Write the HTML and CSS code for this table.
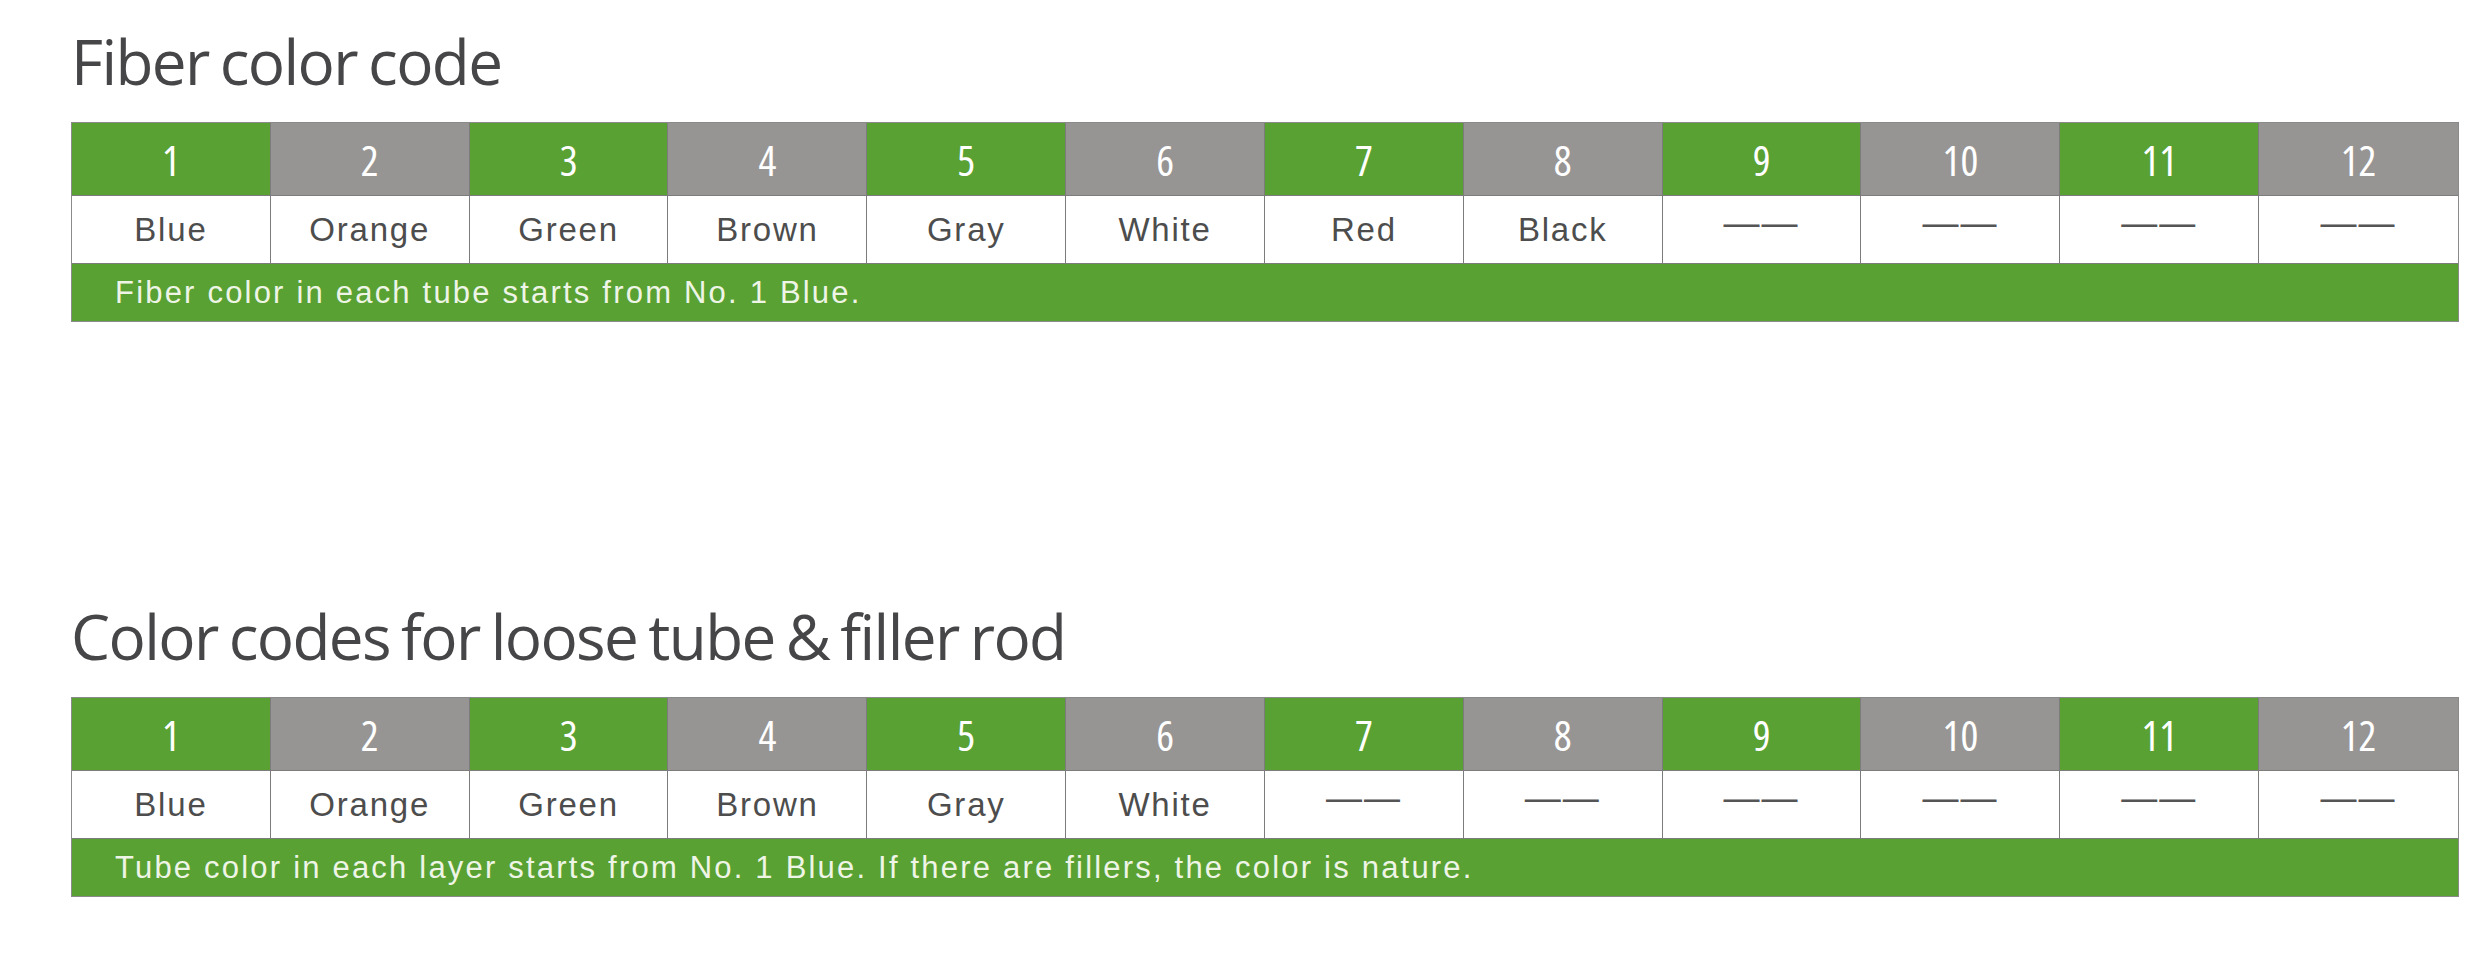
FILE: index.html
```html
<!DOCTYPE html>
<html lang="en">
<head>
<meta charset="utf-8">
<title>Color codes</title>
<link rel="stylesheet" href="styles.css">
</head>
<body>
<main class="sheet">
  <section class="block">
    <h2 class="title">Fiber color code</h2>
    <div class="codes">
      <div class="num green">1</div>
      <div class="num gray">2</div>
      <div class="num green">3</div>
      <div class="num gray">4</div>
      <div class="num green">5</div>
      <div class="num gray">6</div>
      <div class="num green">7</div>
      <div class="num gray">8</div>
      <div class="num green">9</div>
      <div class="num gray">10</div>
      <div class="num green">11</div>
      <div class="num gray">12</div>
      <div class="name">Blue</div>
      <div class="name">Orange</div>
      <div class="name">Green</div>
      <div class="name">Brown</div>
      <div class="name">Gray</div>
      <div class="name">White</div>
      <div class="name">Red</div>
      <div class="name">Black</div>
      <div class="name"><span class="dash">——</span></div>
      <div class="name"><span class="dash">——</span></div>
      <div class="name"><span class="dash">——</span></div>
      <div class="name"><span class="dash">——</span></div>
      <div class="note">Fiber color in each tube starts from No. 1 Blue.</div>
    </div>
  </section>
  <section class="block second">
    <h2 class="title">Color codes for loose tube &amp; filler rod</h2>
    <div class="codes">
      <div class="num green">1</div>
      <div class="num gray">2</div>
      <div class="num green">3</div>
      <div class="num gray">4</div>
      <div class="num green">5</div>
      <div class="num gray">6</div>
      <div class="num green">7</div>
      <div class="num gray">8</div>
      <div class="num green">9</div>
      <div class="num gray">10</div>
      <div class="num green">11</div>
      <div class="num gray">12</div>
      <div class="name">Blue</div>
      <div class="name">Orange</div>
      <div class="name">Green</div>
      <div class="name">Brown</div>
      <div class="name">Gray</div>
      <div class="name">White</div>
      <div class="name"><span class="dash">——</span></div>
      <div class="name"><span class="dash">——</span></div>
      <div class="name"><span class="dash">——</span></div>
      <div class="name"><span class="dash">——</span></div>
      <div class="name"><span class="dash">——</span></div>
      <div class="name"><span class="dash">——</span></div>
      <div class="note">Tube color in each layer starts from No. 1 Blue. If there are fillers, the color is nature.</div>
    </div>
  </section>
</main>
</body>
</html>
```
FILE: styles.css
```css
html, body {
  margin: 0;
  padding: 0;
  background: #ffffff;
}

.sheet {
  width: 2388px;
  padding: 31px 21px 0 71px;
}

.block.second {
  margin-top: 284px;
}

.title {
  margin: 0 0 30px 0;
  font-family: "Open Sans", "Noto Sans", sans-serif;
  font-weight: 500;
  font-size: 62px;
  line-height: 61px;
  letter-spacing: -1.6px;
  word-spacing: -3.5px;
  color: #464648;
}

.codes {
  display: grid;
  grid-template-columns: repeat(12, 1fr);
  grid-template-rows: 73px 68px 57px;
  border: 1px solid #8a8a8a;
  background: #ffffff;
}

.num,
.name {
  display: flex;
  align-items: center;
  justify-content: center;
  border-right: 1px solid #7c7c7c;
  border-bottom: 1px solid #7c7c7c;
}

.num:nth-child(12),
.name:nth-child(24) {
  border-right: none;
}

.num {
  font-family: "Liberation Sans Narrow", "Open Sans", sans-serif;
  font-stretch: condensed;
  font-size: 42px;
  color: #ffffff;
}

.num.green {
  background: #59a132;
}

.num.gray {
  background: #979594;
}

.name {
  font-family: "Liberation Sans", Arial, sans-serif;
  font-size: 33px;
  line-height: 40px;
  letter-spacing: 1.8px;
  color: #4d4d4d;
}

.dash {
  margin-bottom: 13px;
  font-size: 36px;
  line-height: 40px;
  letter-spacing: 2px;
  color: #555555;
}

.note {
  grid-column: 1 / -1;
  display: flex;
  align-items: center;
  padding-left: 43px;
  background: #59a132;
  font-family: "Liberation Sans", Arial, sans-serif;
  font-size: 31px;
  letter-spacing: 2.2px;
  color: #eef5e6;
}
```
